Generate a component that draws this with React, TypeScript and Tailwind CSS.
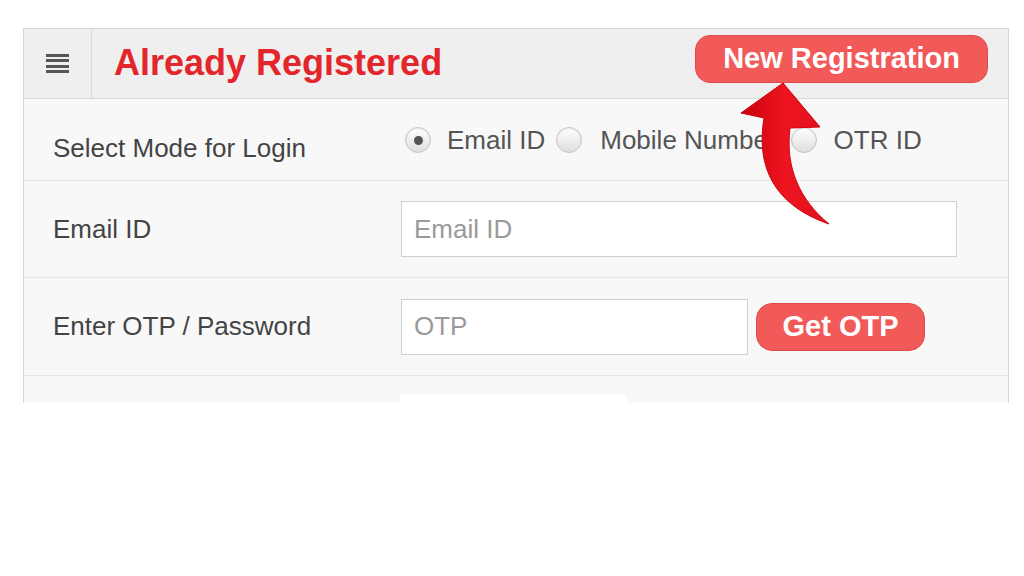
import React from "react";

function Radio({ checked }: { checked?: boolean }) {
  return (
    <span className="flex h-[26px] w-[26px] shrink-0 items-center justify-center rounded-full border border-[#c4c4c4] bg-gradient-to-b from-[#ffffff] to-[#dedede] shadow-[inset_0_1px_2px_rgba(0,0,0,0.08)]">
      {checked && <span className="h-[9px] w-[9px] rounded-full bg-[#555555]" />}
    </span>
  );
}

export default function App() {
  return (
    <div className="relative h-[576px] w-[1024px] overflow-hidden bg-white font-[family-name:'Liberation_Sans',Arial,sans-serif]">
      <div className="ml-[23px] mt-[28px] h-[375px] w-[986px] overflow-hidden border-x border-t border-[#d6d6d6] bg-[#f8f8f8]">
        {/* Header */}
        <div className="flex h-[70px] items-center border-b border-[#d9d9d9] bg-[#efefef]">
          <div className="flex h-full w-[68px] items-center justify-center border-r border-[#d9d9d9]">
            <div className="flex w-[23px] flex-col gap-[2.5px]">
              <span className="h-[3px] bg-[#555555]" />
              <span className="h-[3px] bg-[#555555]" />
              <span className="h-[3px] bg-[#555555]" />
              <span className="h-[3px] bg-[#555555]" />
            </div>
          </div>
          <h1 className="ml-[22px] mt-[-2px] text-[36px] font-bold text-[#e2262b]">Already Registered</h1>
          <button className="ml-auto mr-[20px] mt-[-10px] h-[48px] rounded-[15px] border border-[#e04a4a] bg-[#f25a5a] px-[27px] text-[29px] font-bold text-white">
            New Registration
          </button>
        </div>

        {/* Login mode */}
        <div className="flex h-[82px] border-b border-[#e6e6e6]">
          <div className="w-[377px] pl-[29px] pt-[34px] text-[26px] leading-[30px] text-[#444444]">Select Mode for Login</div>
          <div className="mt-[26px] flex items-center self-start pl-[4px] text-[26px] leading-[30px] text-[#555555]">
            <Radio checked />
            <span className="ml-[16px]">Email ID</span>
            <span className="ml-[11px]"><Radio /></span>
            <span className="ml-[18px]">Mobile Number</span>
            <span className="ml-[14px]"><Radio /></span>
            <span className="ml-[17px]">OTR ID</span>
          </div>
        </div>

        {/* Email */}
        <div className="flex h-[97px] items-center border-b border-[#e6e6e6]">
          <div className="w-[377px] pl-[29px] text-[26px] text-[#444444]">Email ID</div>
          <input
            className="h-[56px] w-[556px] border border-[#cfcfcf] bg-white px-[12px] text-[26px] text-[#444444] outline-none placeholder:text-[#9a9a9a]"
            placeholder="Email ID"
          />
        </div>

        {/* OTP */}
        <div className="flex h-[98px] items-center border-b border-[#e6e6e6]">
          <div className="w-[377px] pl-[29px] text-[26px] text-[#444444]">Enter OTP / Password</div>
          <input
            className="h-[56px] w-[347px] border border-[#cfcfcf] bg-white px-[12px] text-[26px] text-[#444444] outline-none placeholder:text-[#9a9a9a]"
            placeholder="OTP"
          />
          <button className="ml-[8px] h-[48px] w-[169px] rounded-[16px] border border-[#e04a4a] bg-[#f25a5a] text-[29px] font-bold text-white">
            Get OTP
          </button>
        </div>

        {/* Next row (cut off) */}
        <div className="flex pt-[19px]">
          <div className="w-[376px]" />
          <div className="h-[30px] w-[227px] bg-white" />
        </div>
      </div>

      {/* Pointer arrow */}
      <svg className="pointer-events-none absolute left-0 top-0" width="1024" height="576" viewBox="0 0 1024 576">
        <defs>
          <linearGradient id="arrowFill" x1="0" y1="0" x2="1" y2="0">
            <stop offset="0" stopColor="#c8000a" />
            <stop offset="0.5" stopColor="#ee1520" />
            <stop offset="1" stopColor="#e0101a" />
          </linearGradient>
        </defs>
        <path
          d="M783 83 L741 113 L764 118 C757 160 768 203 829 224 C800 200 785 168 790 128 L820 127 Z"
          fill="url(#arrowFill)"
          stroke="#d00010"
          strokeWidth="1"
          strokeLinejoin="round"
        />
      </svg>
    </div>
  );
}
